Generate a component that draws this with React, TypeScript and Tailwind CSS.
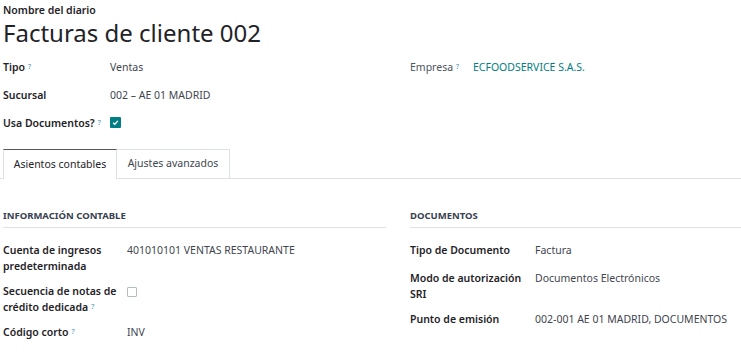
import React from "react";

const Q = () => (
  <sup className="ml-[3px] text-[7px] text-[#3a8fb7] font-normal relative -top-[2px]">?</sup>
);

function Row({ label, q, children, labelW }: { label: React.ReactNode; q?: boolean; children?: React.ReactNode; labelW: string }) {
  return (
    <div className="flex items-start min-h-[19px]">
      <div className={`${labelW} shrink-0 font-semibold text-[#1f2328] leading-[16px]`}>
        {label}
        {q && <Q />}
      </div>
      <div className="flex-1 leading-[16px] text-[#3f4650]">{children}</div>
    </div>
  );
}

export default function App() {
  return (
    <div
      className="w-[741px] h-[357px] overflow-hidden bg-white text-[10.5px] text-[#3f4650]"
      style={{ fontFamily: '"Noto Sans", sans-serif' }}
    >
      <div className="pl-[3px]">
        <div className="pt-[2px] h-[16px] leading-[16px] font-semibold text-[#1f2328]">Nombre del diario</div>
        <div className="h-[34px] leading-[34px] text-[24px] text-[#1f2328]">Facturas de cliente 002</div>
        <div className="flex pt-[9px]">
          <div className="w-[383px] flex flex-col gap-[12px]">
            <div className="flex items-start h-[16px]">
              <div className="w-[107px] font-semibold text-[#1f2328] leading-[16px]">
                Tipo<Q />
              </div>
              <div className="leading-[16px]">Ventas</div>
            </div>
            <div className="flex items-start h-[16px]">
              <div className="w-[107px] font-semibold text-[#1f2328] leading-[16px]">Sucursal</div>
              <div className="leading-[16px]">002 – AE 01 MADRID</div>
            </div>
            <div className="flex items-start h-[16px]">
              <div className="w-[107px] font-semibold text-[#1f2328] leading-[16px] whitespace-nowrap">
                Usa Documentos?<Q />
              </div>
              <div className="pt-[2px]">
                <div className="w-[11px] h-[11px] bg-[#017e84] rounded-[1px] flex items-center justify-center">
                  <svg width="7" height="7" viewBox="0 0 8 8">
                    <path d="M1.3 4.3 L3.2 6 L6.7 2.1" stroke="white" strokeWidth="1.5" fill="none" />
                  </svg>
                </div>
              </div>
            </div>
          </div>
          <div className="ml-[24px] flex-1">
            <div className="flex items-start h-[16px]">
              <div className="w-[63px] text-[#4b5563] leading-[16px]">
                Empresa<Q />
              </div>
              <div className="leading-[16px] text-[#017e84]">ECFOODSERVICE S.A.S.</div>
            </div>
          </div>
        </div>
      </div>

      <div className="mt-[18px] flex items-end h-[30px]">
        <div className="w-[3px] h-full border-b border-[#dee2e6]" />
        <div className="w-[114px] h-full flex items-center justify-center border-t border-t-[#5c5364] border-x border-x-[#dee2e6] text-[#1f2328]">
          Asientos contables
        </div>
        <div className="w-[113px] h-full flex items-center justify-center border-t border-r border-b border-[#dee2e6] text-[#3f4650]">
          Ajustes avanzados
        </div>
        <div className="flex-1 h-full border-b border-[#dee2e6]" />
      </div>

      <div className="pl-[3px] pt-[30px] flex">
        <div className="w-[383px]">
          <div className="pb-[4px] border-b border-[#dee2e6] text-[9.5px] font-bold uppercase text-[#374151] leading-[14px]">
            Información contable
          </div>
          <div className="pt-[14px] flex flex-col gap-[9px]">
            <Row label={<>Cuenta de ingresos<br />predeterminada</>} labelW="w-[124px]">
              401010101 VENTAS RESTAURANTE
            </Row>
            <Row label={<>Secuencia de notas de<br />crédito dedicada</>} q labelW="w-[124px]">
              <div className="pt-[4px]">
                <div className="w-[10px] h-[10px] border border-[#b5bcc3] rounded-[1px]" />
              </div>
            </Row>
            <Row label="Código corto" q labelW="w-[124px]">
              INV
            </Row>
          </div>
        </div>
        <div className="ml-[24px] flex-1">
          <div className="pb-[4px] border-b border-[#dee2e6] text-[9.5px] font-bold uppercase text-[#374151] leading-[14px]">
            Documentos
          </div>
          <div className="pt-[14px] flex flex-col gap-[9px]">
            <Row label="Tipo de Documento" labelW="w-[125px]">Factura</Row>
            <Row label={<>Modo de autorización<br />SRI</>} labelW="w-[125px]">Documentos Electrónicos</Row>
            <Row label="Punto de emisión" labelW="w-[125px]">002-001 AE 01 MADRID, DOCUMENTOS</Row>
          </div>
        </div>
      </div>
    </div>
  );
}
